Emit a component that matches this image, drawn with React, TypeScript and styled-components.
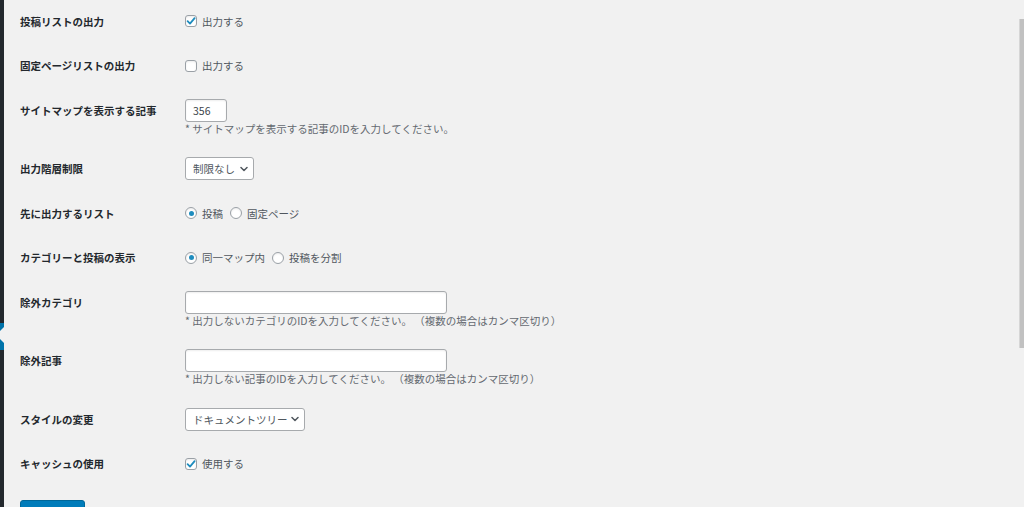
import React from "react";
import styled, { createGlobalStyle } from "styled-components";

const GlobalStyle = createGlobalStyle`
  html, body {
    margin: 0;
    padding: 0;
    height: 100%;
    overflow: hidden;
    background: #f1f1f1;
  }

  body {
    font-family: "Noto Sans CJK JP", "Noto Sans", sans-serif;
    font-size: 10.5px;
    color: #23282d;
  }
`;

const Page = styled.div`
  display: flex;
  height: 507px;
  overflow: hidden;
`;

const Sidebar = styled.div`
  width: 4px;
  flex-shrink: 0;
  background: #23282d;
  display: flex;
  flex-direction: column;
  padding-top: 323px;
`;

const CurrentItem = styled.div`
  position: relative;
  height: 27px;
  background: #0073aa;

  &::after {
    content: "";
    position: absolute;
    right: 0;
    top: 4px;
    border: 8px solid transparent;
    border-right-color: #f1f1f1;
  }
`;

const Main = styled.main`
  flex: 1;
  padding: 9.5px 0 0 16px;
`;

const Form = styled.div`
  display: flex;
  flex-direction: column;
  gap: 21.5px;
`;

const Row = styled.div`
  display: grid;
  grid-template-columns: 165px auto;
  align-items: start;
`;

const Label = styled.div`
  font-weight: 700;
  line-height: 23px;
  color: #23282d;
  white-space: nowrap;
`;

const Field = styled.div`
  display: flex;
  flex-direction: column;
  align-items: flex-start;
`;

const Line = styled.div`
  display: flex;
  align-items: center;
  height: 23px;
`;

const Option = styled.label`
  display: flex;
  align-items: center;
  gap: 5px;
  margin-right: 7px;
  color: #50575e;
  white-space: nowrap;
`;

const Box = styled.span<{ $round?: boolean }>`
  width: 12px;
  height: 12px;
  box-sizing: border-box;
  border: 1px solid #9aa0a6;
  border-radius: ${({ $round }) => ($round ? "50%" : "3px")};
  background: #fff;
  box-shadow: inset 0 1px 2px rgba(0, 0, 0, 0.08);
  display: flex;
  align-items: center;
  justify-content: center;
`;

const Dot = styled.span`
  width: 5px;
  height: 5px;
  border-radius: 50%;
  background: #1e8cbe;
`;

const TextInput = styled.div<{ $w: number; $h?: number }>`
  width: ${({ $w }) => $w}px;
  height: ${({ $h }) => $h ?? 23}px;
  box-sizing: border-box;
  border: 1px solid #a7aaad;
  border-radius: 3px;
  background: #fff;
  box-shadow: inset 0 1px 2px rgba(0, 0, 0, 0.07);
  padding: 0 7px;
  display: flex;
  align-items: center;
  color: #3c434a;
`;

const Select = styled.div<{ $w: number }>`
  width: ${({ $w }) => $w}px;
  height: 23px;
  box-sizing: border-box;
  border: 1px solid #a7aaad;
  border-radius: 3px;
  background: #fff;
  padding: 0 5px 0 7px;
  display: flex;
  align-items: center;
  justify-content: space-between;
  color: #50575e;
  white-space: nowrap;
`;

const Help = styled.div`
  line-height: 14px;
  color: #646970;
  white-space: nowrap;
`;

// the button's caption sits below the fold in the screenshot
const SaveButton = styled.button`
  display: block;
  margin-top: 25px;
  width: 65px;
  height: 28px;
  border: 1px solid #006799;
  border-radius: 3px;
  background: #007cba;
  padding: 0;
`;

const ScrollThumb = styled.div`
  position: fixed;
  right: 0;
  top: 19px;
  width: 4px;
  height: 329px;
  background: #c1c1c1;
  border-left: 1px solid #d6d6d6;
`;

const Check = () => (
  <svg width="10" height="10" viewBox="0 0 10 10">
    <path d="M1.6 5.2 L4 7.6 L8.6 2.2" fill="none" stroke="#1e8cbe" strokeWidth="1.8" strokeLinecap="round" strokeLinejoin="round" />
  </svg>
);

const Chevron = () => (
  <svg width="8" height="6" viewBox="0 0 8 6">
    <path d="M1 1.5 L4 4.5 L7 1.5" fill="none" stroke="#50575e" strokeWidth="1.5" strokeLinecap="round" strokeLinejoin="round" />
  </svg>
);

const Checkbox = ({ checked, text }: { checked?: boolean; text: string }) => (
  <Option>
    <Box>{checked && <Check />}</Box>
    {text}
  </Option>
);

const Radio = ({ checked, text }: { checked?: boolean; text: string }) => (
  <Option>
    <Box $round>{checked && <Dot />}</Box>
    {text}
  </Option>
);

const App = () => {
  return (
    <>
      <GlobalStyle />
      <Page>
        <Sidebar>
          <CurrentItem />
        </Sidebar>
        <Main>
          <Form>
            <Row>
              <Label>投稿リストの出力</Label>
              <Field>
                <Line><Checkbox checked text="出力する" /></Line>
              </Field>
            </Row>
            <Row>
              <Label>固定ページリストの出力</Label>
              <Field>
                <Line><Checkbox text="出力する" /></Line>
              </Field>
            </Row>
            <Row>
              <Label>サイトマップを表示する記事</Label>
              <Field>
                <Line><TextInput $w={42}>356</TextInput></Line>
                <Help>* サイトマップを表示する記事のIDを入力してください。</Help>
              </Field>
            </Row>
            <Row>
              <Label>出力階層制限</Label>
              <Field>
                <Line><Select $w={69}>制限なし<Chevron /></Select></Line>
              </Field>
            </Row>
            <Row>
              <Label>先に出力するリスト</Label>
              <Field>
                <Line>
                  <Radio checked text="投稿" />
                  <Radio text="固定ページ" />
                </Line>
              </Field>
            </Row>
            <Row>
              <Label>カテゴリーと投稿の表示</Label>
              <Field>
                <Line>
                  <Radio checked text="同一マップ内" />
                  <Radio text="投稿を分割" />
                </Line>
              </Field>
            </Row>
            <Row>
              <Label>除外カテゴリ</Label>
              <Field>
                <Line><TextInput $w={262} $h={23} /></Line>
                <Help>* 出力しないカテゴリのIDを入力してください。 （複数の場合はカンマ区切り）</Help>
              </Field>
            </Row>
            <Row>
              <Label>除外記事</Label>
              <Field>
                <Line><TextInput $w={262} $h={23} /></Line>
                <Help>* 出力しない記事のIDを入力してください。 （複数の場合はカンマ区切り）</Help>
              </Field>
            </Row>
            <Row>
              <Label>スタイルの変更</Label>
              <Field>
                <Line><Select $w={120}>ドキュメントツリー<Chevron /></Select></Line>
              </Field>
            </Row>
            <Row>
              <Label>キャッシュの使用</Label>
              <Field>
                <Line><Checkbox checked text="使用する" /></Line>
              </Field>
            </Row>
          </Form>
          <SaveButton aria-label="変更を保存" />
        </Main>
      </Page>
      <ScrollThumb />
    </>
  );
};

export default App;
